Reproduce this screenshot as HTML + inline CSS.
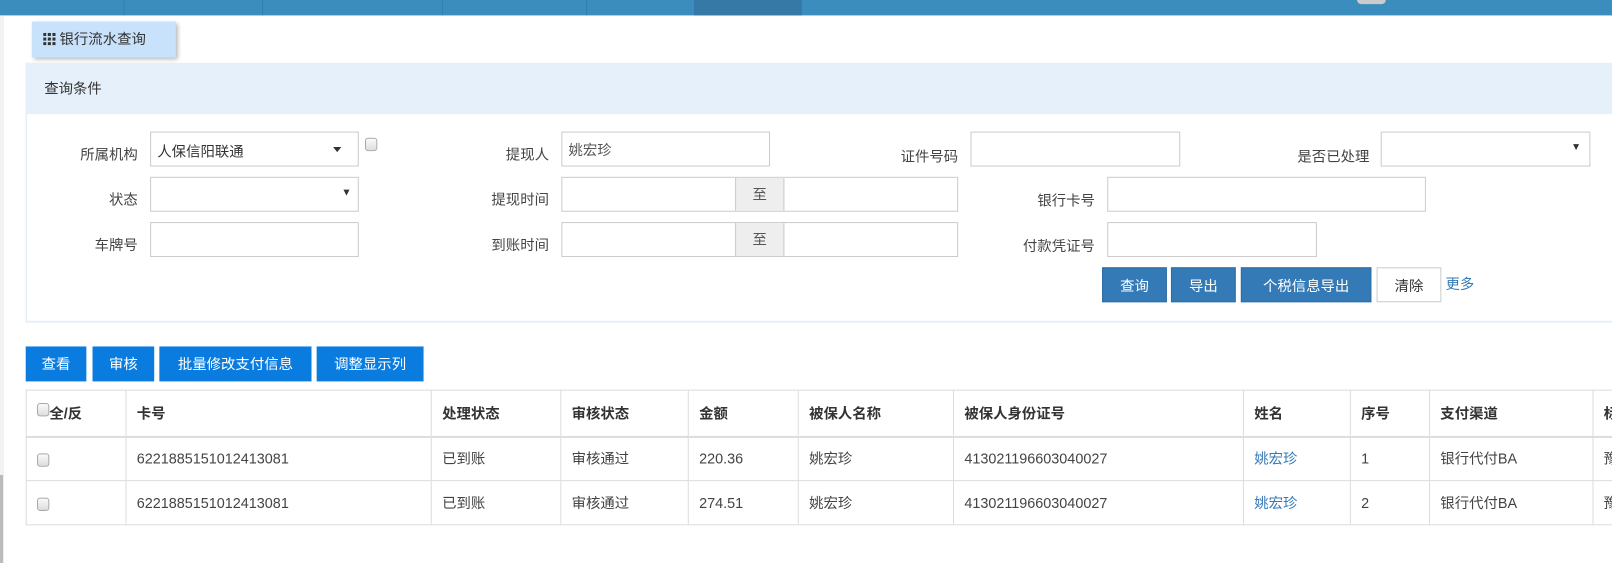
<!DOCTYPE html>
<html><head><meta charset="utf-8"><style>
*{box-sizing:border-box;margin:0;padding:0}
body{width:1612px;height:548px;overflow:hidden;background:#fff;font-family:"Liberation Sans","Noto Sans CJK SC",sans-serif;font-size:14px;color:#333;position:relative}
#w{position:absolute;left:0;top:0;width:1568px;height:533px;transform:scale(1.02806);transform-origin:0 0}
.a{position:absolute}
.top{left:0;top:0;width:1568px;height:15px;background:#3b8dbd}
.div{top:0;width:1px;height:15px;background:#3580ab}
.lbl{text-align:right;font-size:14px;color:#444}
.inp{border:1px solid #ccc;background:#fff;height:34px}
.btn{color:#fff;font-size:14px;text-align:center;line-height:34px}
.b1{background:#337ab7;border:1px solid #2e6da4}
.b2{background:#0a7ce0}
table{border-collapse:collapse;position:absolute;left:25px;top:379px;width:1600px;table-layout:fixed}
td,th{border:1px solid #ddd;text-align:left;padding:0 10px;font-size:14px;white-space:nowrap;overflow:hidden}
th{height:45px;border-bottom:2px solid #ddd;font-weight:bold}
td{height:43px;color:#444}
.cb{display:inline-block;width:12px;height:13px;border:1px solid #aaa;border-radius:3px;background:linear-gradient(#fafafa,#ddd);vertical-align:middle}
a{color:#337ab7;text-decoration:none}
</style></head><body><div id="w">
<div class="a top"></div>
<div class="a div" style="left:120px"></div><div class="a div" style="left:255px"></div><div class="a div" style="left:430px"></div><div class="a div" style="left:570px"></div>
<div class="a" style="left:675px;top:0;width:105px;height:15px;background:#3679a6"></div>
<div class="a" style="left:1320px;top:0;width:28px;height:4px;background:#ccc;border-radius:0 0 14px 14px"></div>
<div class="a" style="left:0;top:15px;width:4px;height:533px;background:#f2f2f2"></div>
<div class="a" style="left:0;top:462px;width:3px;height:86px;background:#bbb"></div>

<div class="a" style="left:31px;top:21px;width:140px;height:35px;background:#c9e2fb;box-shadow:2px 2px 4px rgba(0,0,0,.3);line-height:35px;font-size:14px;color:#333;padding-left:11px">
<span style="display:inline-block;width:12px;height:12px;vertical-align:-1px;position:relative">
<svg width="12" height="12" style="position:absolute;left:0;top:0"><g fill="#333"><rect x="0" y="0" width="3" height="3"/><rect x="4.5" y="0" width="3" height="3"/><rect x="9" y="0" width="3" height="3"/><rect x="0" y="4.5" width="3" height="3"/><rect x="4.5" y="4.5" width="3" height="3"/><rect x="9" y="4.5" width="3" height="3"/><rect x="0" y="9" width="3" height="3"/><rect x="4.5" y="9" width="3" height="3"/><rect x="9" y="9" width="3" height="3"/></g></svg></span> 银行流水查询</div>

<div class="a" style="left:25px;top:61px;width:1600px;height:253px;border-left:1px solid #dbe9f7;border-bottom:2px solid #e6f0fa"></div>
<div class="a" style="left:25px;top:61px;width:1600px;height:50px;background:#e6f0fa;line-height:50px;padding-left:18px;font-size:14px;color:#333">查询条件</div>

<div class="a lbl" style="left:40px;top:140px;width:94px">所属机构</div>
<div class="a inp" style="left:146px;top:128px;width:203px;padding:8px 6px;font-size:14px;color:#333">人保信阳联通<span style="position:absolute;right:16px;top:14px;border:4px solid transparent;border-top:5px solid #333"></span></div>
<span class="a cb" style="left:355px;top:134px"></span>
<div class="a lbl" style="left:40px;top:184px;width:94px">状态</div>
<div class="a inp" style="left:146px;top:172px;width:203px"><span style="position:absolute;right:6px;top:9px;font-size:10px;color:#333">▼</span></div>
<div class="a lbl" style="left:40px;top:228px;width:94px">车牌号</div>
<div class="a inp" style="left:146px;top:216px;width:203px"></div>

<div class="a lbl" style="left:440px;top:140px;width:94px">提现人</div>
<div class="a inp" style="left:546px;top:128px;width:203px;padding:7px 6px;color:#555">姚宏珍</div>
<div class="a lbl" style="left:440px;top:184px;width:94px">提现时间</div>
<div class="a inp" style="left:546px;top:172px;width:386px"></div>
<div class="a" style="left:715px;top:173px;width:48px;height:32px;background:#eee;border-left:1px solid #ccc;border-right:1px solid #ccc;text-align:center;line-height:32px;color:#555">至</div>
<div class="a lbl" style="left:440px;top:228px;width:94px">到账时间</div>
<div class="a inp" style="left:546px;top:216px;width:386px"></div>
<div class="a" style="left:715px;top:217px;width:48px;height:32px;background:#eee;border-left:1px solid #ccc;border-right:1px solid #ccc;text-align:center;line-height:32px;color:#555">至</div>

<div class="a lbl" style="left:830px;top:142px;width:102px">证件号码</div>
<div class="a inp" style="left:944px;top:128px;width:204px"></div>
<div class="a lbl" style="left:960px;top:185px;width:105px">银行卡号</div>
<div class="a inp" style="left:1077px;top:172px;width:310px"></div>
<div class="a lbl" style="left:960px;top:229px;width:105px">付款凭证号</div>
<div class="a inp" style="left:1077px;top:216px;width:204px"></div>

<div class="a lbl" style="left:1220px;top:142px;width:112px">是否已处理</div>
<div class="a inp" style="left:1343px;top:128px;width:204px"><span style="position:absolute;right:8px;top:9px;font-size:10px;color:#333">▼</span></div>

<div class="a btn b1" style="left:1072px;top:260px;width:63px;height:34px">查询</div>
<div class="a btn b1" style="left:1139px;top:260px;width:63px;height:34px">导出</div>
<div class="a btn b1" style="left:1207px;top:260px;width:127px;height:34px">个税信息导出</div>
<div class="a btn" style="left:1339px;top:260px;width:63px;height:34px;border:1px solid #ccc;color:#333">清除</div>
<div class="a" style="left:1406px;top:266px;color:#337ab7">更多</div>

<div class="a btn b2" style="left:25px;top:337px;width:59px;height:34px">查看</div>
<div class="a btn b2" style="left:90px;top:337px;width:60px;height:34px">审核</div>
<div class="a btn b2" style="left:155px;top:337px;width:148px;height:34px">批量修改支付信息</div>
<div class="a btn b2" style="left:308px;top:337px;width:104px;height:34px">调整显示列</div>

<table>
<colgroup><col style="width:97px"><col style="width:297px"><col style="width:126px"><col style="width:124px"><col style="width:107px"><col style="width:151px"><col style="width:282px"><col style="width:104px"><col style="width:77px"><col style="width:159px"><col></colgroup>
<tr><th style="padding-left:10px"><span class="cb" style="vertical-align:2px"></span>全/反</th><th>卡号</th><th>处理状态</th><th>审核状态</th><th>金额</th><th>被保人名称</th><th>被保人身份证号</th><th>姓名</th><th>序号</th><th>支付渠道</th><th>标</th></tr>
<tr><td><span class="cb"></span></td><td>6221885151012413081</td><td>已到账</td><td>审核通过</td><td>220.36</td><td>姚宏珍</td><td>413021196603040027</td><td><a>姚宏珍</a></td><td>1</td><td>银行代付BA</td><td>豫</td></tr>
<tr><td><span class="cb"></span></td><td>6221885151012413081</td><td>已到账</td><td>审核通过</td><td>274.51</td><td>姚宏珍</td><td>413021196603040027</td><td><a>姚宏珍</a></td><td>2</td><td>银行代付BA</td><td>豫</td></tr>
</table>
</div></body></html>
